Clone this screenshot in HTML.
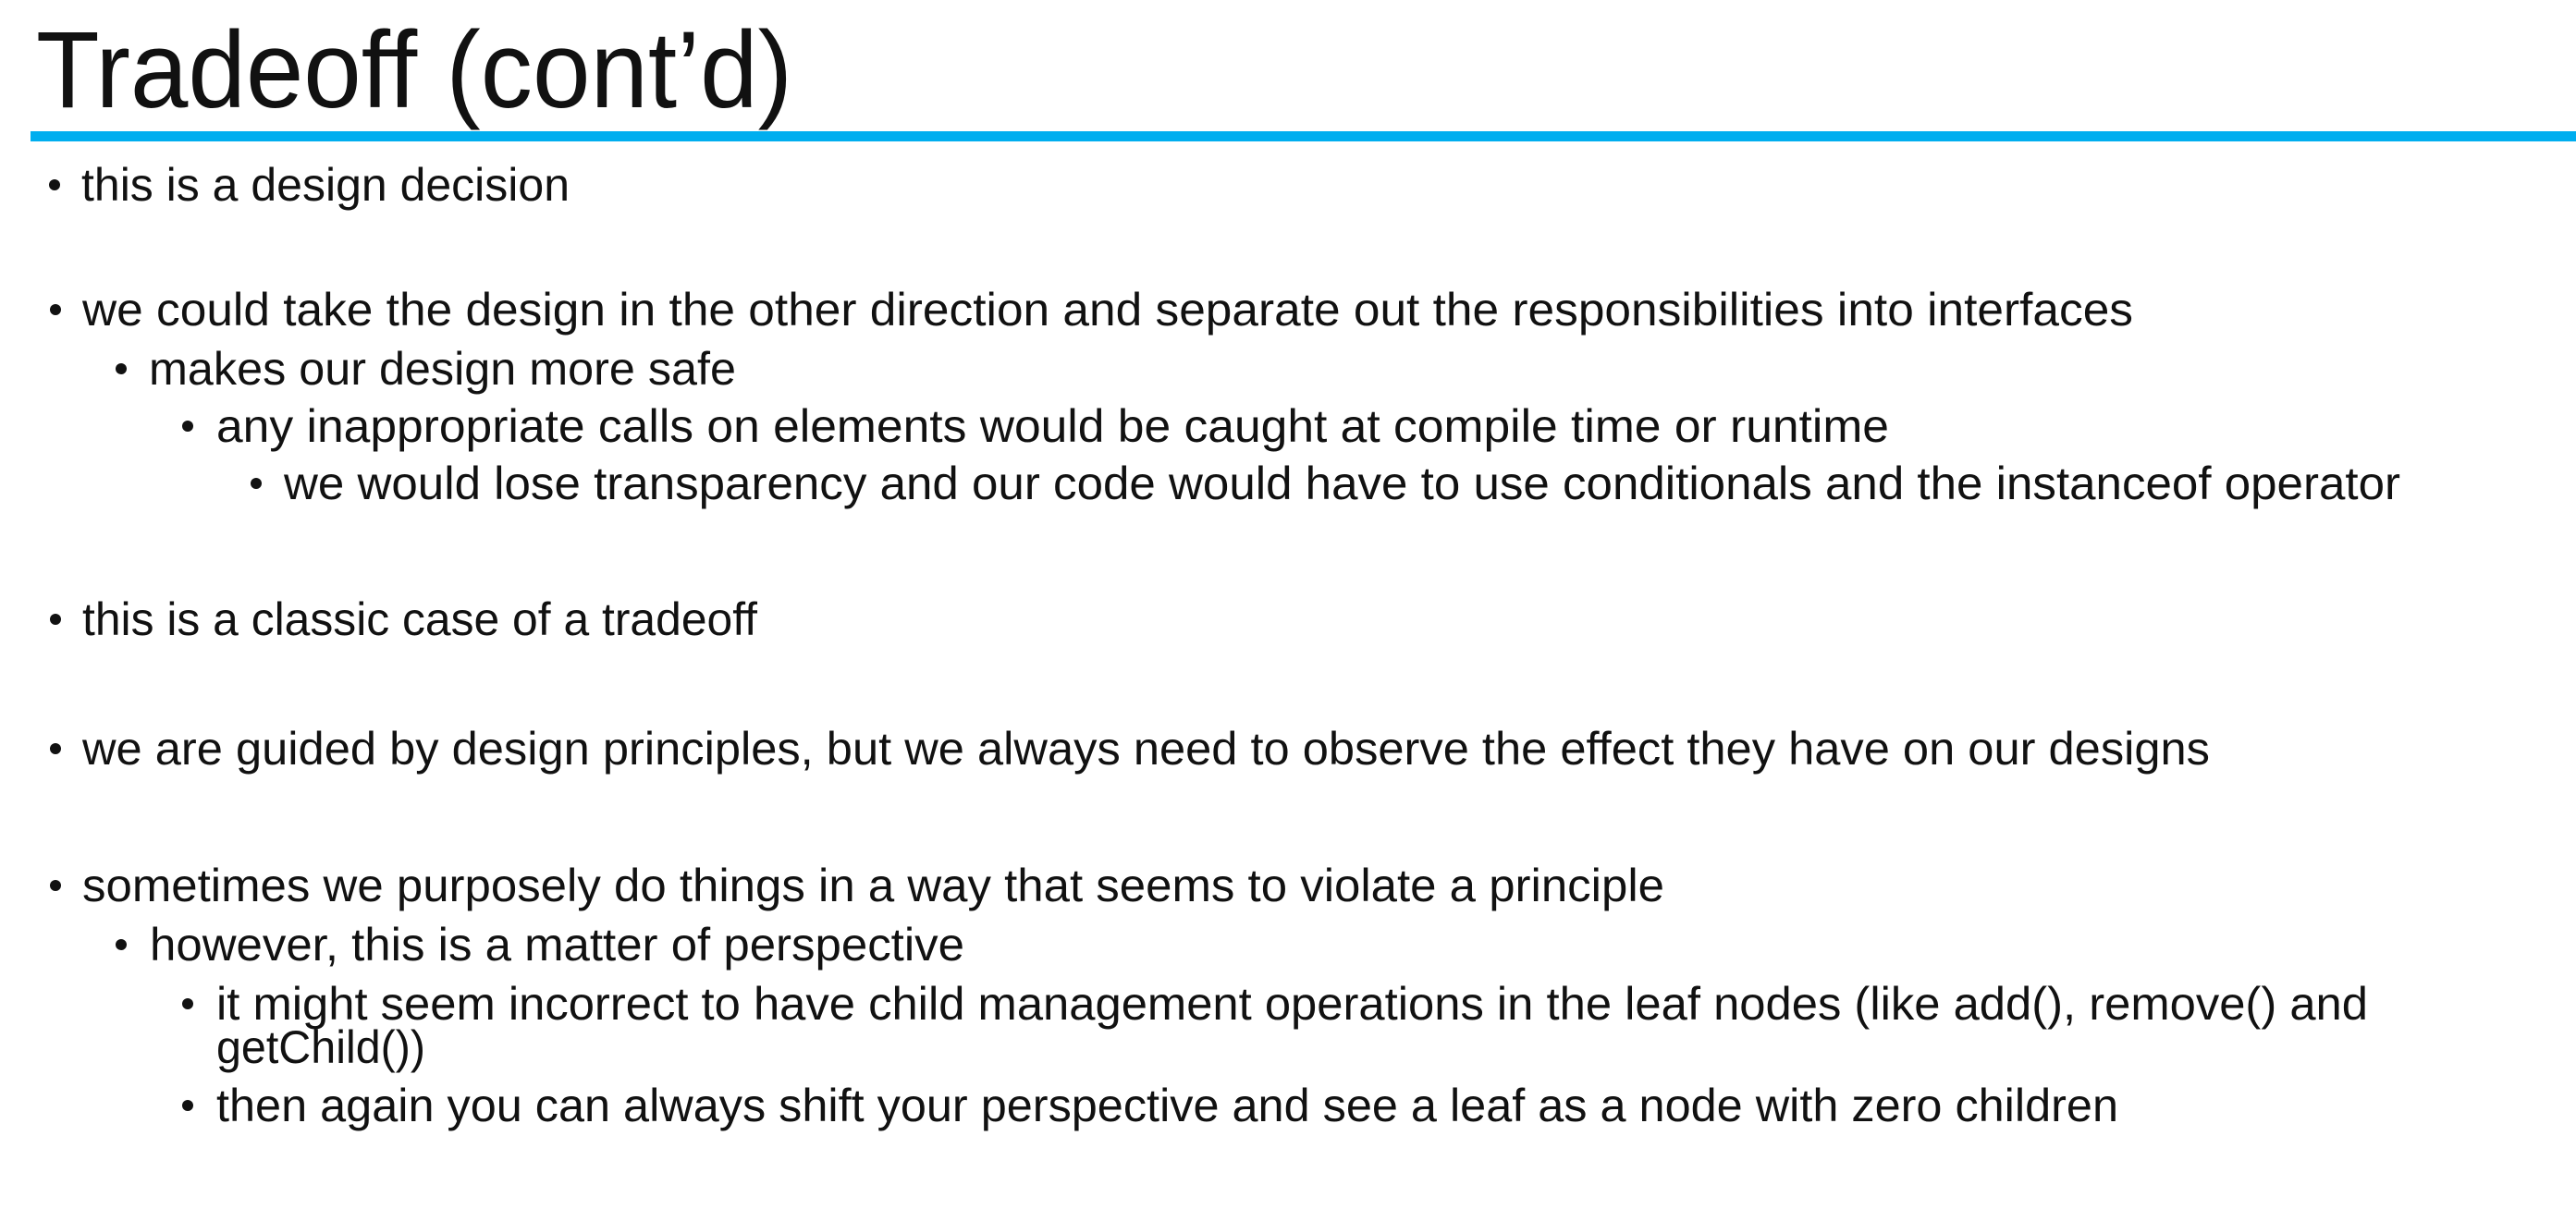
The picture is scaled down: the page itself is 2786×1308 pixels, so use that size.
<!DOCTYPE html>
<html><head><meta charset="utf-8"><style>
html,body{margin:0;padding:0;background:#fff;width:2786px;height:1308px;overflow:hidden}
svg{display:block}
text{font-family:"Liberation Sans",sans-serif;fill:#111}
</style></head><body>
<svg width="2786" height="1308" viewBox="0 0 2786 1308" xmlns="http://www.w3.org/2000/svg">
<text x="39" y="116" font-size="118" textLength="818" lengthAdjust="spacingAndGlyphs">Tradeoff (cont’d)</text>
<rect x="33" y="142" width="2753" height="11" fill="#00aeef"/>
<g font-size="50">
<circle cx="59" cy="200" r="6" fill="#111"/>
<text x="88" y="217" textLength="528" lengthAdjust="spacingAndGlyphs">this is a design decision</text>
<circle cx="60" cy="335" r="6" fill="#111"/>
<text x="89" y="352" textLength="2218" lengthAdjust="spacingAndGlyphs">we could take the design in the other direction and separate out the responsibilities into interfaces</text>
<circle cx="131" cy="399" r="6" fill="#111"/>
<text x="161" y="416" textLength="635" lengthAdjust="spacingAndGlyphs">makes our design more safe</text>
<circle cx="203" cy="461" r="6" fill="#111"/>
<text x="234" y="478" textLength="1809" lengthAdjust="spacingAndGlyphs">any inappropriate calls on elements would be caught at compile time or runtime</text>
<circle cx="277" cy="523" r="6" fill="#111"/>
<text x="307" y="540" textLength="2289" lengthAdjust="spacingAndGlyphs">we would lose transparency and our code would have to use conditionals and the instanceof operator</text>
<circle cx="60" cy="670" r="6" fill="#111"/>
<text x="89" y="687" textLength="730" lengthAdjust="spacingAndGlyphs">this is a classic case of a tradeoff</text>
<circle cx="60" cy="810" r="6" fill="#111"/>
<text x="89" y="827" textLength="2301" lengthAdjust="spacingAndGlyphs">we are guided by design principles, but we always need to observe the effect they have on our designs</text>
<circle cx="60" cy="958" r="6" fill="#111"/>
<text x="89" y="975" textLength="1711" lengthAdjust="spacingAndGlyphs">sometimes we purposely do things in a way that seems to violate a principle</text>
<circle cx="131" cy="1022" r="6" fill="#111"/>
<text x="162" y="1039" textLength="881" lengthAdjust="spacingAndGlyphs">however, this is a matter of perspective</text>
<circle cx="203" cy="1086" r="6" fill="#111"/>
<text x="234" y="1103" textLength="2327" lengthAdjust="spacingAndGlyphs">it might seem incorrect to have child management operations in the leaf nodes (like add(), remove() and</text>
<text x="234" y="1150" textLength="226" lengthAdjust="spacingAndGlyphs">getChild())</text>
<circle cx="203" cy="1196" r="6" fill="#111"/>
<text x="234" y="1213" textLength="2057" lengthAdjust="spacingAndGlyphs">then again you can always shift your perspective and see a leaf as a node with zero children</text>
</g>
</svg>
</body></html>
